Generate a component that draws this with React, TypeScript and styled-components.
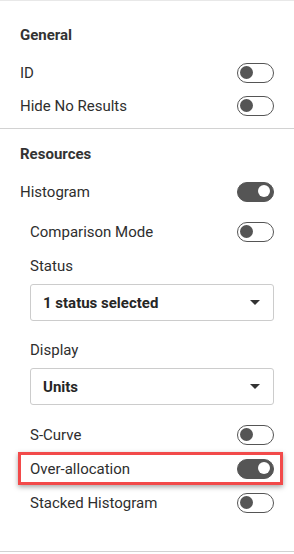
import React from "react";
import styled, { createGlobalStyle } from "styled-components";

const Global = createGlobalStyle`
  html, body { margin: 0; padding: 0; background: #ffffff; }
  body { font-family: Roboto, "Noto Sans", "Liberation Sans", sans-serif; color: #333333; }
  * { box-sizing: border-box; }
`;

const Panel = styled.div`
  width: 294px;
  background: #ffffff;
  border-top: 1px solid #e8e8e8;
`;

const Section = styled.section<{ $top: number; $bottom: number }>`
  padding: ${(p) => p.$top}px 20px ${(p) => p.$bottom}px 20px;
  border-bottom: 1px solid #d2d2d2;
  display: flex;
  flex-direction: column;
`;

const Title = styled.div`
  font-size: 15px;
  line-height: 20px;
  font-weight: 700;
  color: #333333;
  margin-bottom: 11px;
`;

const Row = styled.div<{ $highlight?: boolean }>`
  position: relative;
  height: 33px;
  display: flex;
  align-items: center;
  justify-content: space-between;
  ${(p) =>
    p.$highlight &&
    `
    margin: 1px 0 1px 0;
    &::after {
      content: "";
      position: absolute;
      left: -12px;
      right: -9px;
      top: 0;
      bottom: 0;
      border: 3px solid #f24a4a;
      box-shadow: 0 2px 5px rgba(0, 0, 0, 0.35);
      pointer-events: none;
    }
  `}
`;

const Label = styled.span`
  font-size: 15px;
  line-height: 20px;
  color: #2e2e2e;
`;

const Track = styled.span<{ $on: boolean }>`
  position: relative;
  width: 37px;
  height: 20px;
  border-radius: 10px;
  border: 1.5px solid #555555;
  background: ${(p) => (p.$on ? "#555555" : "#ffffff")};
  flex-shrink: 0;
`;

const Knob = styled.span<{ $on: boolean }>`
  position: absolute;
  top: 2px;
  left: ${(p) => (p.$on ? "20px" : "1.5px")};
  width: ${(p) => (p.$on ? "12px" : "13px")};
  height: ${(p) => (p.$on ? "12px" : "13px")};
  margin-top: ${(p) => (p.$on ? "0.5px" : "0")};
  border-radius: 50%;
  background: ${(p) => (p.$on ? "#ffffff" : "#555555")};
`;

const SubGroup = styled.div`
  display: flex;
  flex-direction: column;
  padding-left: 10px;
  margin-top: 7px;
`;

const Field = styled.div<{ $gap: number }>`
  display: flex;
  flex-direction: column;
  margin-top: ${(p) => p.$gap}px;
`;

const FieldLabel = styled.div`
  font-size: 15px;
  line-height: 20px;
  color: #2e2e2e;
  margin-bottom: 8px;
`;

const Select = styled.div`
  height: 37px;
  border: 1px solid #cccccc;
  border-radius: 3px;
  display: flex;
  align-items: center;
  justify-content: space-between;
  padding: 0 13px 0 12px;
  background: #ffffff;
`;

const SelectValue = styled.span`
  font-size: 15px;
  font-weight: 700;
  color: #262626;
`;

const Caret = styled.span`
  width: 0;
  height: 0;
  border-left: 5px solid transparent;
  border-right: 5px solid transparent;
  border-top: 5px solid #333333;
`;

const ToggleList = styled.div`
  display: flex;
  flex-direction: column;
  margin-top: 13px;
`;

function Toggle({ on }: { on: boolean }) {
  return (
    <Track $on={on}>
      <Knob $on={on} />
    </Track>
  );
}

function ToggleRow({ label, on, highlight }: { label: string; on: boolean; highlight?: boolean }) {
  return (
    <Row $highlight={highlight}>
      <Label>{label}</Label>
      <Toggle on={on} />
    </Row>
  );
}

export default function App() {
  return (
    <>
      <Global />
      <Panel>
        <Section $top={24} $bottom={6}>
          <Title>General</Title>
          <ToggleRow label="ID" on={false} />
          <ToggleRow label="Hide No Results" on={false} />
        </Section>
        <Section $top={15} $bottom={32}>
          <Title>Resources</Title>
          <ToggleRow label="Histogram" on={true} />
          <SubGroup>
            <ToggleRow label="Comparison Mode" on={false} />
            <Field $gap={8}>
              <FieldLabel>Status</FieldLabel>
              <Select>
                <SelectValue>1 status selected</SelectValue>
                <Caret />
              </Select>
            </Field>
            <Field $gap={19}>
              <FieldLabel>Display</FieldLabel>
              <Select>
                <SelectValue>Units</SelectValue>
                <Caret />
              </Select>
            </Field>
            <ToggleList>
              <ToggleRow label="S-Curve" on={false} />
              <ToggleRow label="Over-allocation" on={true} highlight />
              <ToggleRow label="Stacked Histogram" on={false} />
            </ToggleList>
          </SubGroup>
        </Section>
      </Panel>
    </>
  );
}
